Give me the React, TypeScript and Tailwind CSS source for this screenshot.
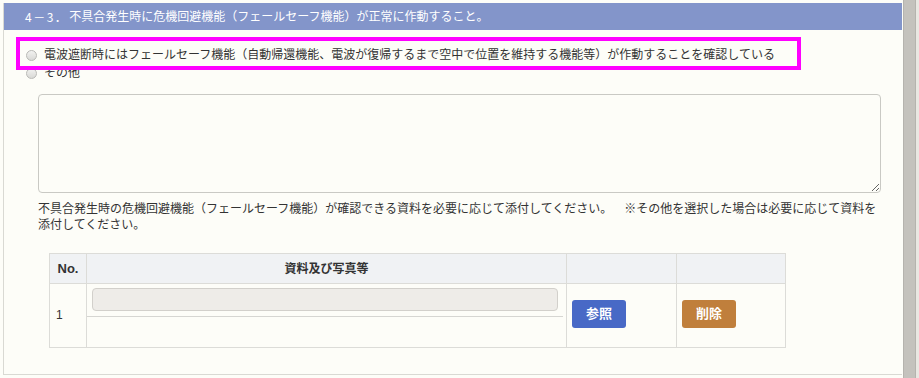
const font = { fontFamily: '"Liberation Sans", "Noto Sans CJK JP", sans-serif' };

function Radio() {
  return (
    <span className="inline-block w-[11px] h-[11px] rounded-full border border-[#b9b9b6] bg-gradient-to-b from-[#f2f2f0] to-[#d9d9d6] shrink-0" />
  );
}

export default function App() {
  return (
    <div
      className="relative w-[919px] h-[378px] bg-[#fdfdf8] flex overflow-hidden text-[#333] text-[12px] [text-spacing-trim:space-all]"
      style={font}
    >
      <div className="mt-[3px] ml-[3px] w-[899px] h-[372px] border-l border-b border-[#d9d9d3] flex flex-col">
        <div className="h-[27px] bg-[#8395ca] text-white flex items-center pl-[21px] shrink-0">
          <span className="tracking-[1.5px] mr-[1px]" style={{ fontFamily: '"Noto Sans CJK JP", sans-serif' }}>
            4－3．
          </span>
          <span>不具合発生時に危機回避機能（フェールセーフ機能）が正常に作動すること。</span>
        </div>

        <div className="pt-[16px] pl-[22px] flex flex-col">
          <label className="flex items-center gap-[7px] h-[18px]">
            <Radio />
            <span>電波遮断時にはフェールセーフ機能（自動帰還機能、電波が復帰するまで空中で位置を維持する機能等）が作動することを確認している</span>
          </label>
          <label className="flex items-center gap-[7px] h-[18px]">
            <Radio />
            <span>その他</span>
          </label>
        </div>

        <div className="pl-[34px] pt-[12px]">
          <textarea
            className="block w-[843px] h-[99px] bg-[#fdfdf8] border border-[#c9c9c4] rounded-[4px] resize"
          />
          <p className="w-[846px] mt-[8px] leading-[16px]">
            不具合発生時の危機回避機能（フェールセーフ機能）が確認できる資料を必要に応じて添付してください。　※その他を選択した場合は必要に応じて資料を
            <br />
            添付してください。
          </p>
        </div>

        <div className="pl-[45px] pt-[20px]">
          <table className="border-collapse w-[737px]">
            <thead>
              <tr className="h-[30px] bg-[#f0f2f4]">
                <th className="w-[37px] border border-[#dcdcd8] text-[13px] font-bold text-[#333]">No.</th>
                <th className="w-[480px] border border-[#dcdcd8] text-[12px] font-bold text-[#333]">資料及び写真等</th>
                <th className="w-[110px] border border-[#dcdcd8]" />
                <th className="border border-[#dcdcd8]" />
              </tr>
            </thead>
            <tbody>
              <tr className="h-[64px]">
                <td className="border border-[#dcdcd8] pl-[6px] pb-[2px] align-middle text-[12px]">1</td>
                <td className="border border-[#dcdcd8] p-0 align-top">
                  <div className="h-[33px] border-b border-[#d6d6d2] px-[5px] pt-[4px] mr-[3px]">
                    <div className="h-[23px] bg-[#eeece8] border border-[#d2d0cb] rounded-[4px]" />
                  </div>
                </td>
                <td className="border border-[#dcdcd8] pl-[5px] pb-[4px] align-middle">
                  <button className="block w-[54px] h-[28px] rounded-[3px] bg-[#4869c6] text-white font-bold text-[13px]">
                    参照
                  </button>
                </td>
                <td className="border border-[#dcdcd8] pl-[5px] pb-[4px] align-middle">
                  <button className="block w-[54px] h-[28px] rounded-[3px] bg-[#c07f3c] text-white font-bold text-[13px]">
                    削除
                  </button>
                </td>
              </tr>
            </tbody>
          </table>
        </div>
      </div>

      <div className="ml-[1px] w-[13px] h-full bg-[#c4c2bd] border-x border-[#b5b3ae]" />
      <div className="flex-1 h-full bg-[#e9e7e2]" />

      <div className="absolute left-[16px] top-[37px] w-[785px] h-[33px] border-[4px] border-[#ff00ff] pointer-events-none" />
    </div>
  );
}
